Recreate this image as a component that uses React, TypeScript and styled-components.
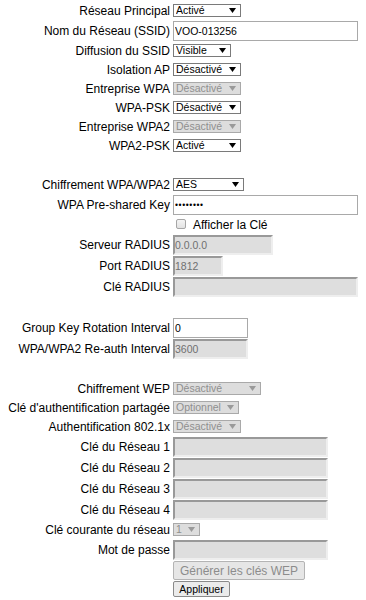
import React from 'react';
import styled, { createGlobalStyle } from 'styled-components';

const Global = createGlobalStyle`
  html, body { margin: 0; padding: 0; background: #ffffff; }
  body { font-family: "Liberation Sans", Arial, sans-serif; color: #000; }
`;

const Form = styled.form`
  display: flex;
  flex-direction: column;
  padding-top: 1px;
  width: 366px;
`;

const Row = styled.div<{ $h: number; $align?: string }>`
  display: grid;
  grid-template-columns: 170px 1fr;
  column-gap: 3px;
  height: ${(p) => p.$h}px;
  align-items: ${(p) => p.$align ?? 'center'};
`;

const Label = styled.label`
  font-size: 12px;
  line-height: 14px;
  text-align: right;
  white-space: nowrap;
  color: #000;
`;

const Control = styled.div`
  display: flex;
  align-items: center;
  height: 100%;
`;

const Spacer = styled.div`
  height: 20px;
`;

const SelectWrap = styled.span<{ $w: number }>`
  position: relative;
  display: inline-block;
  width: ${(p) => p.$w}px;
  height: 13px;
`;

const NativeSelect = styled.select`
  appearance: none;
  -webkit-appearance: none;
  display: block;
  box-sizing: border-box;
  width: 100%;
  height: 13px;
  margin: 0;
  padding: 0 0 0 2px;
  border: 1px solid #7a7a7a;
  border-radius: 0;
  background: #ffffff;
  font-family: "Liberation Sans", Arial, sans-serif;
  font-size: 10.5px;
  line-height: 11px;
  color: #000;
  outline: none;
  &:disabled {
    background: #dddddd;
    border-color: #a9a9a9;
    color: #8f8f8f;
    opacity: 1;
  }
`;

const Arrow = styled.svg<{ $disabled?: boolean }>`
  position: absolute;
  right: 5px;
  top: 4px;
  width: 7px;
  height: 5px;
  pointer-events: none;
  fill: ${(p) => (p.$disabled ? '#9a9a9a' : '#000000')};
`;

const TextInput = styled.input<{ $w: number; $password?: boolean }>`
  box-sizing: border-box;
  width: ${(p) => p.$w}px;
  height: 20px;
  margin: 0;
  padding: 0 1px;
  border: 1px solid #a9a9a9;
  border-radius: 0;
  background: #ffffff;
  font-family: "Liberation Sans", Arial, sans-serif;
  font-size: ${(p) => (p.$password ? '8.5px' : '10.5px')};
  letter-spacing: ${(p) => (p.$password ? '0.6px' : 'normal')};
  color: #000;
  outline: none;
  &:disabled {
    padding: 0;
    background: #dedede;
    border-width: 2px;
    border-style: solid;
    border-color: #999999 #eeeeee #eeeeee #999999;
    color: #707070;
    opacity: 1;
  }
`;

const CheckLine = styled.label`
  display: flex;
  align-items: center;
  font-size: 12px;
  line-height: 14px;
  color: #000;
`;

const CheckBox = styled.input`
  appearance: none;
  -webkit-appearance: none;
  box-sizing: border-box;
  width: 10px;
  height: 10px;
  margin: 0 7px 1px 3px;
  border: 1px solid #a6a6a6;
  border-radius: 2px;
  background: linear-gradient(#f4f4f4, #e2e2e2);
`;

const Button = styled.button<{ $w: number; $h: number; $fs: number }>`
  box-sizing: border-box;
  width: ${(p) => p.$w}px;
  height: ${(p) => p.$h}px;
  margin: 0;
  padding: 0;
  border: 1px solid #8a8a8a;
  border-radius: 2px;
  background: #ebebeb;
  font-family: "Liberation Sans", Arial, sans-serif;
  font-size: ${(p) => p.$fs}px;
  color: #000;
  &:disabled {
    color: #8c8c8c;
    border-color: #b4b4b4;
    background: #e6e6e6;
  }
`;

type Field =
  | { kind: 'select'; label: string; w: number; options: string[]; value: string; disabled?: boolean }
  | { kind: 'input'; label: string; w: number; value: string; disabled?: boolean; password?: boolean }
  | { kind: 'spacer' }
  | { kind: 'checkbox'; text: string }
  | { kind: 'button'; text: string; w: number; h: number; fs: number; rowH: number; disabled?: boolean };

const onOff = ['Activé', 'Désactivé'];

const fields: Field[] = [
  { kind: 'select', label: 'Réseau Principal', w: 68, options: onOff, value: 'Activé' },
  { kind: 'input', label: 'Nom du Réseau (SSID)', w: 185, value: 'VOO-013256' },
  { kind: 'select', label: 'Diffusion du SSID', w: 58, options: ['Visible', 'Caché'], value: 'Visible' },
  { kind: 'select', label: 'Isolation AP', w: 68, options: onOff, value: 'Désactivé' },
  { kind: 'select', label: 'Entreprise WPA', w: 68, options: onOff, value: 'Désactivé', disabled: true },
  { kind: 'select', label: 'WPA-PSK', w: 68, options: onOff, value: 'Désactivé' },
  { kind: 'select', label: 'Entreprise WPA2', w: 68, options: onOff, value: 'Désactivé', disabled: true },
  { kind: 'select', label: 'WPA2-PSK', w: 68, options: onOff, value: 'Activé' },
  { kind: 'spacer' },
  { kind: 'select', label: 'Chiffrement WPA/WPA2', w: 71, options: ['AES', 'TKIP', 'TKIP+AES'], value: 'AES' },
  { kind: 'input', label: 'WPA Pre-shared Key', w: 185, value: '12345678', password: true },
  { kind: 'checkbox', text: 'Afficher la Clé' },
  { kind: 'input', label: 'Serveur RADIUS', w: 100, value: '0.0.0.0', disabled: true },
  { kind: 'input', label: 'Port RADIUS', w: 50, value: '1812', disabled: true },
  { kind: 'input', label: 'Clé RADIUS', w: 185, value: '', disabled: true },
  { kind: 'spacer' },
  { kind: 'input', label: 'Group Key Rotation Interval', w: 75, value: '0' },
  { kind: 'input', label: 'WPA/WPA2 Re-auth Interval', w: 75, value: '3600', disabled: true },
  { kind: 'spacer' },
  { kind: 'select', label: 'Chiffrement WEP', w: 88, options: onOff, value: 'Désactivé', disabled: true },
  { kind: 'select', label: "Clé d'authentification partagée", w: 66, options: ['Optionnel', 'Requis'], value: 'Optionnel', disabled: true },
  { kind: 'select', label: 'Authentification 802.1x', w: 68, options: onOff, value: 'Désactivé', disabled: true },
  { kind: 'input', label: 'Clé du Réseau 1', w: 155, value: '', disabled: true },
  { kind: 'input', label: 'Clé du Réseau 2', w: 155, value: '', disabled: true },
  { kind: 'input', label: 'Clé du Réseau 3', w: 155, value: '', disabled: true },
  { kind: 'input', label: 'Clé du Réseau 4', w: 155, value: '', disabled: true },
  { kind: 'select', label: 'Clé courante du réseau', w: 27, options: ['1', '2', '3', '4'], value: '1', disabled: true },
  { kind: 'input', label: 'Mot de passe', w: 155, value: '', disabled: true },
  { kind: 'button', text: 'Générer les clés WEP', w: 132, h: 19, fs: 12, rowH: 21, disabled: true },
  { kind: 'button', text: 'Appliquer', w: 57, h: 16, fs: 10.5, rowH: 16 },
];

function renderField(f: Field, i: number) {
  switch (f.kind) {
    case 'spacer':
      return <Spacer key={i} />;
    case 'select':
      return (
        <Row key={i} $h={19}>
          <Label>{f.label}</Label>
          <Control>
            <SelectWrap $w={f.w}>
              <NativeSelect defaultValue={f.value} disabled={f.disabled}>
                {f.options.map((o) => (
                  <option key={o} value={o}>
                    {o}
                  </option>
                ))}
              </NativeSelect>
              <Arrow viewBox="0 0 7 5" $disabled={f.disabled}>
                <polygon points="0,0 7,0 3.5,5" />
              </Arrow>
            </SelectWrap>
          </Control>
        </Row>
      );
    case 'input':
      return (
        <Row key={i} $h={21}>
          <Label>{f.label}</Label>
          <Control>
            <TextInput
              $w={f.w}
              $password={f.password}
              type={f.password ? 'password' : 'text'}
              defaultValue={f.value}
              disabled={f.disabled}
            />
          </Control>
        </Row>
      );
    case 'checkbox':
      return (
        <Row key={i} $h={19}>
          <span />
          <Control>
            <CheckLine>
              <CheckBox type="checkbox" />
              {f.text}
            </CheckLine>
          </Control>
        </Row>
      );
    case 'button':
      return (
        <Row key={i} $h={f.rowH} $align="start">
          <span />
          <Control>
            <Button type="button" $w={f.w} $h={f.h} $fs={f.fs} disabled={f.disabled}>
              {f.text}
            </Button>
          </Control>
        </Row>
      );
  }
}

export default function App() {
  return (
    <>
      <Global />
      <Form onSubmit={(e) => e.preventDefault()}>{fields.map(renderField)}</Form>
    </>
  );
}
